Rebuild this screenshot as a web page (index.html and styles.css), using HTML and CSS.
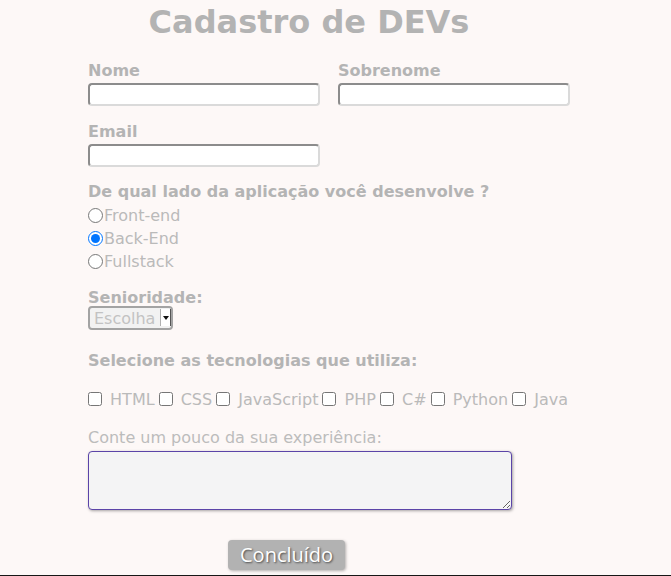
FILE: index.html
```html
<!DOCTYPE html>
<html lang="pt-BR">
<head>
<meta charset="utf-8">
<title>Cadastro de DEVs</title>
<link rel="stylesheet" href="styles.css">
</head>
<body>
<main class="page">
  <h1 class="title">Cadastro de DEVs</h1>
  <form class="form">
    <div class="row">
      <div class="field">
        <label class="label" for="nome">Nome</label>
        <input class="text-input" id="nome" type="text">
      </div>
      <div class="field">
        <label class="label" for="sobrenome">Sobrenome</label>
        <input class="text-input" id="sobrenome" type="text">
      </div>
    </div>
    <div class="field field-email">
      <label class="label" for="email">Email</label>
      <input class="text-input" id="email" type="email">
    </div>

    <div class="group group-side">
      <p class="label">De qual lado da aplicação você desenvolve ?</p>
      <label class="radio"><input type="radio" name="lado">Front-end</label>
      <label class="radio"><input type="radio" name="lado" checked>Back-End</label>
      <label class="radio"><input type="radio" name="lado">Fullstack</label>
    </div>

    <div class="group group-senior">
      <label class="label" for="senioridade">Senioridade:</label>
      <span class="select-wrap">
        <select class="select" id="senioridade">
          <option>Escolha</option>
          <option>Júnior</option>
          <option>Pleno</option>
          <option>Sênior</option>
        </select>
        <span class="select-arrow"></span>
      </span>
    </div>

    <div class="group group-tech">
      <p class="label">Selecione as tecnologias que utiliza:</p>
      <div class="checks"><label class="check"><input type="checkbox"> HTML</label><label class="check"><input type="checkbox"> CSS</label><label class="check"><input type="checkbox"> JavaScript</label><label class="check"><input type="checkbox"> PHP</label><label class="check"><input type="checkbox"> C#</label><label class="check"><input type="checkbox"> Python</label><label class="check"><input type="checkbox"> Java</label></div>
    </div>

    <div class="group group-exp">
      <label class="plain-label" for="exp">Conte um pouco da sua experiência:</label>
      <textarea class="textarea" id="exp" autofocus></textarea>
    </div>

    <div class="actions">
      <button class="button" type="button">Concluído</button>
    </div>
  </form>
</main>
</body>
</html>
```
FILE: styles.css
```css
html {
  background: #161616;
}
body {
  margin: 0;
  min-height: 575px;
  background: #fdf8f7;
  font-family: "DejaVu Sans", sans-serif;
  color: #b4b4b4;
}
.page {
  padding: 0 0 0 88px;
}
.title {
  margin: 0;
  padding-top: 4px;
  width: 442px;
  text-align: center;
  font-size: 32px;
  line-height: 37px;
  font-weight: bold;
  color: #b3b3b3;
}
.form {
  margin-top: 20px;
}
.row {
  display: flex;
  gap: 18px;
}
.field {
  display: flex;
  flex-direction: column;
  width: 232px;
}
.field-email {
  margin-top: 16px;
}
.label {
  display: block;
  margin: 0;
  font-size: 16px;
  line-height: 20px;
  font-weight: bold;
  color: #b4b4b4;
}
.text-input {
  box-sizing: border-box;
  margin: 2px 0 0 0;
  height: 23px;
  width: 232px;
  border-style: solid;
  border-width: 2px;
  border-color: #8c8c8c #dadada #dadada #8c8c8c;
  border-radius: 4px;
  background: #fff;
}
.group-side {
  margin-top: 15px;
}
.radio {
  display: flex;
  align-items: center;
  height: 23px;
  font-size: 16px;
  color: #bababa;
}
.radio:first-of-type {
  margin-top: 2px;
}
.radio input {
  margin: 0 1px 0 0;
  width: 15px;
  height: 15px;
}
.group-senior {
  margin-top: 15px;
}
.select-wrap {
  position: relative;
  display: inline-block;
  margin-top: -2px;
}
.select {
  appearance: none;
  -webkit-appearance: none;
  display: block;
  box-sizing: border-box;
  height: 24px;
  width: 85px;
  padding: 0 16px 0 4px;
  font-family: "DejaVu Sans", sans-serif;
  font-size: 16px;
  color: #c2c2c2;
  background: #f2f2f2;
  border: 2px solid #a3a3a3;
  border-radius: 4px;
}
.select-arrow {
  position: absolute;
  top: 3px;
  right: 2px;
  width: 9px;
  height: 17px;
  background: #ffffff;
  border-left: 1px solid #b0b0b0;
  border-right: 1px solid #555555;
}
.select-arrow::after {
  content: "";
  position: absolute;
  left: 2px;
  top: 7px;
  border-left: 3px solid transparent;
  border-right: 3px solid transparent;
  border-top: 4px solid #111111;
}
.group-tech {
  margin-top: 21px;
}
.checks {
  margin-top: 19px;
  font-size: 16px;
  line-height: 20px;
  color: #bababa;
}
.check input {
  margin: 0 3px 0 0;
  width: 14px;
  height: 14px;
  vertical-align: -1px;
}
.check + .check input {
  margin-left: 4px;
}
.group-exp {
  margin-top: 18px;
}
.plain-label {
  display: block;
  font-size: 16px;
  line-height: 20px;
  color: #bcbcbc;
}
.textarea {
  display: block;
  box-sizing: border-box;
  margin-top: 3px;
  width: 424px;
  height: 59px;
  background: #f4f4f5;
  border: 1px solid #5b44a8;
  border-radius: 4px;
  box-shadow: 1px 1px 3px rgba(0, 0, 0, 0.35);
  outline: none;
}
.actions {
  margin-top: 30px;
  padding-left: 140px;
}
.button {
  height: 30px;
  padding: 0 12px;
  font-family: "Open Sans", sans-serif;
  font-size: 20px;
  line-height: 30px;
  color: #ffffff;
  background: #b2b2b2;
  border: none;
  border-radius: 4px;
  text-shadow: 1px 1px 2px rgba(0, 0, 0, 0.6);
  box-shadow: 1px 1px 3px rgba(0, 0, 0, 0.3);
}
```
